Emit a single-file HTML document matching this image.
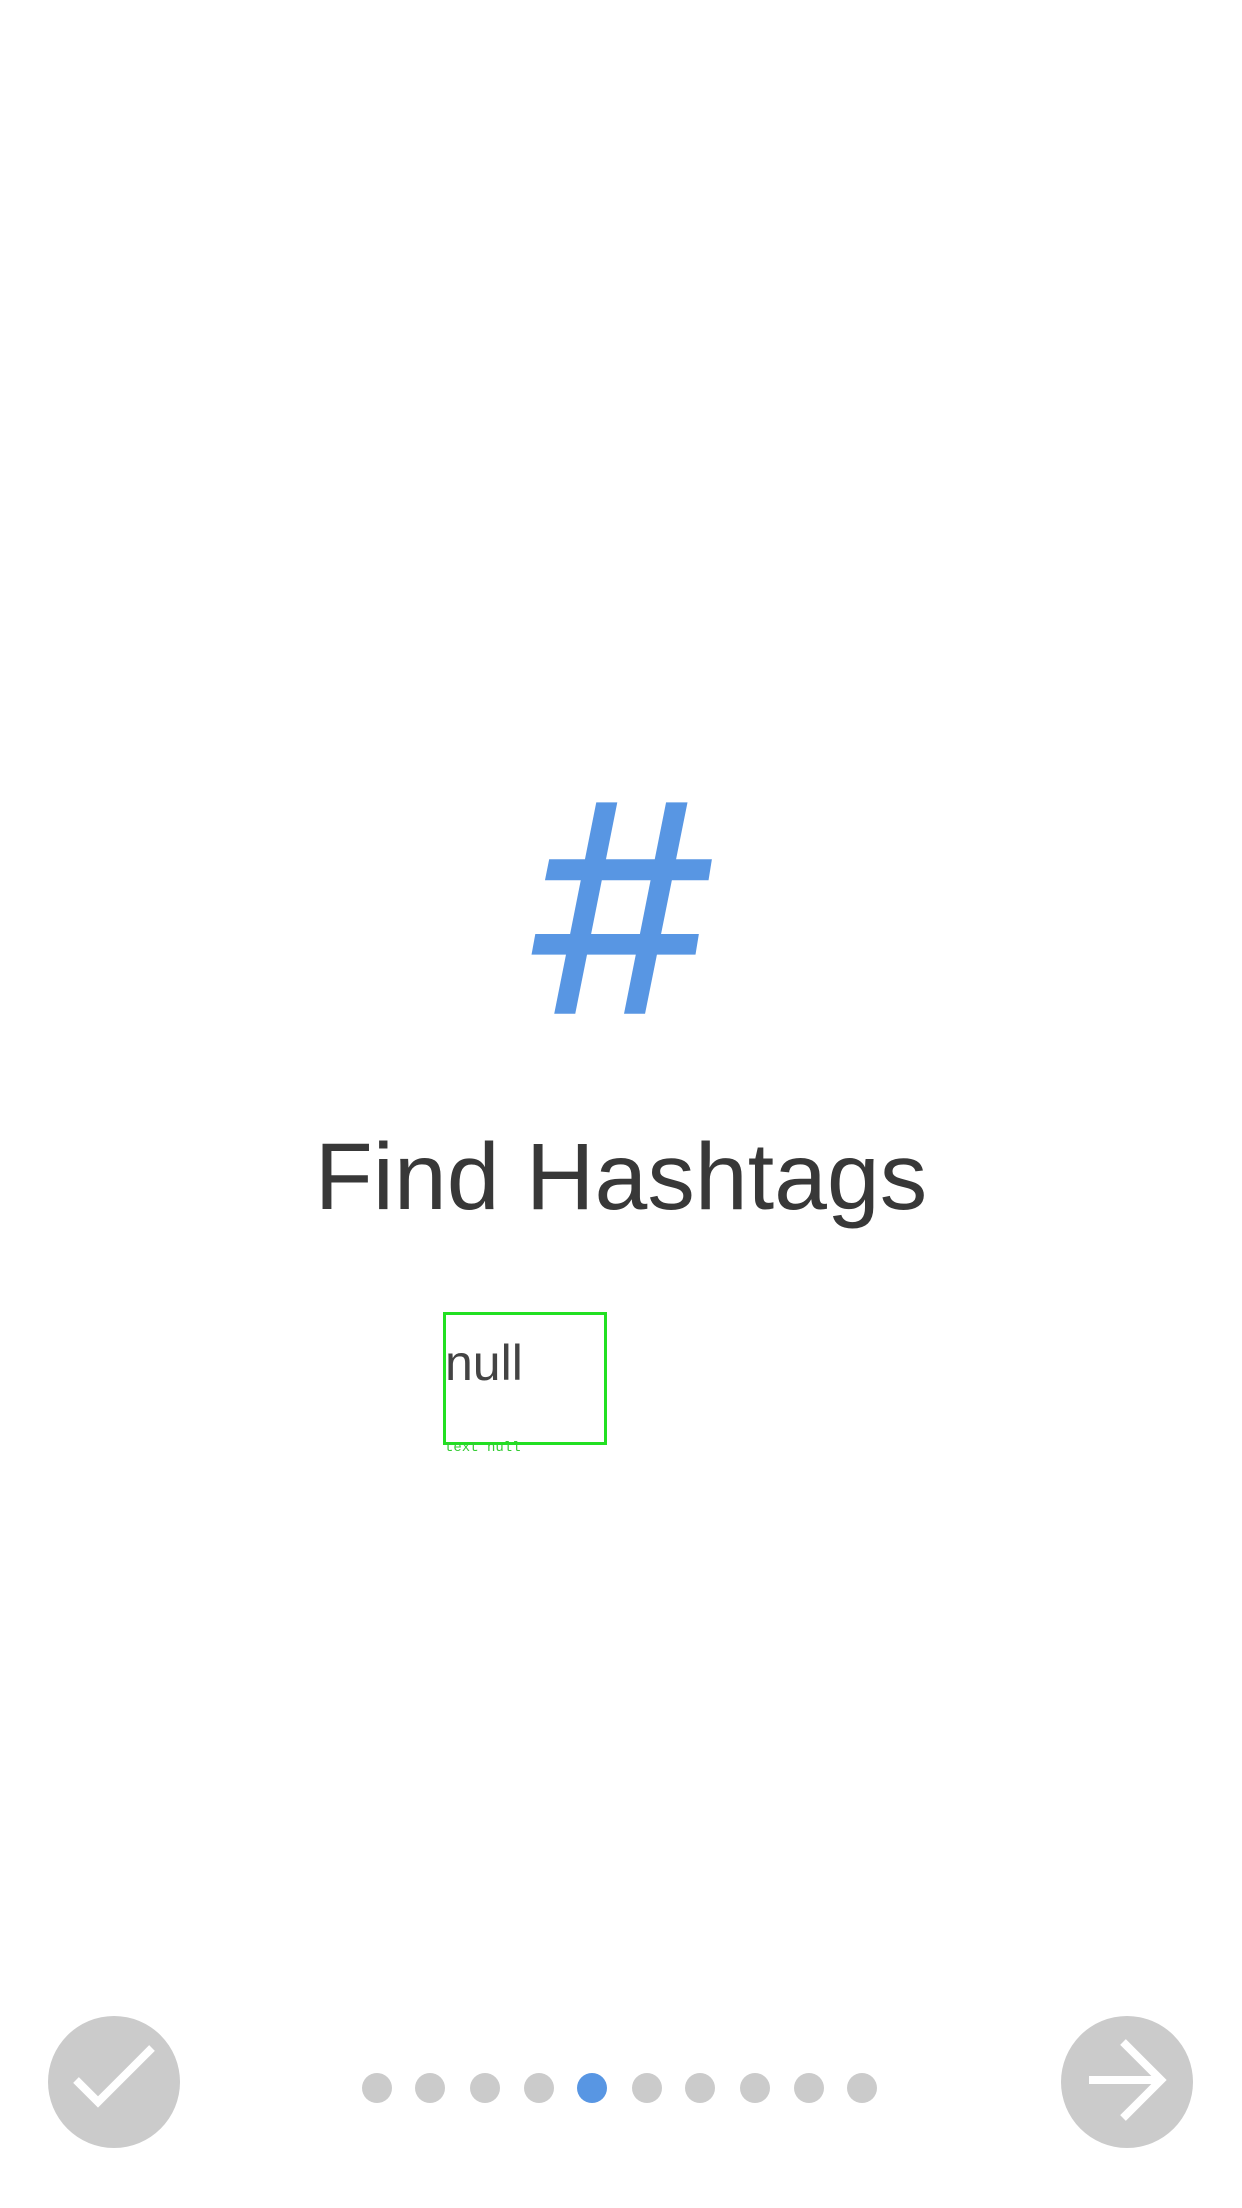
<!DOCTYPE html>
<html><head><meta charset="utf-8"><style>
html,body{margin:0;padding:0;background:#fff;}
body{width:1242px;height:2208px;position:relative;overflow:hidden;font-family:"Liberation Sans",sans-serif;}
.t{position:absolute;left:0;width:1242px;text-align:center;top:1127px;font-size:95px;color:#383838;line-height:100px;}
.box{position:absolute;left:443px;top:1312px;width:158px;height:127px;border:3px solid #22e022;}
.nl{position:absolute;left:445px;top:1336px;font-size:50px;color:#444;line-height:54px;}
.lb{position:absolute;left:445px;top:1440px;font-size:14px;color:#33cc33;font-family:"Liberation Mono",monospace;}
.c{position:absolute;width:132px;height:132px;border-radius:50%;background:#cbcbcb;top:2016px;}
.d{position:absolute;width:30px;height:30px;border-radius:50%;background:#cbcbcb;top:2073px;}
</style></head><body>
<svg style="position:absolute;left:529px;top:801px" width="185" height="215" viewBox="540 50 440 480" preserveAspectRatio="none">
<g fill="#5896e3">
<polygon points="700,53 750,53 650,525 600,525"/>
<polygon points="866,53 917,53 816,525 766,525"/>
<polygon points="588,180 975,180 967,227 578,227"/>
<polygon points="555,347 944,347 936,393 546,393"/>
</g></svg>
<div class="t">Find Hashtags</div>
<div class="box"></div>
<div class="nl">null</div>
<div class="lb">text null</div>
<div class="c" style="left:48px"><svg width="132" height="132" viewBox="0 0 132 132"><polyline points="28,64 50,86 104,32" fill="none" stroke="#fff" stroke-width="8"/></svg></div>
<div class="c" style="left:1061px"><svg width="132" height="132" viewBox="0 0 132 132"><path d="M28,64 H98 M62,26 L100,64 L62,102" fill="none" stroke="#fff" stroke-width="8"/></svg></div>
<div class="d" style="left:362px"></div>
<div class="d" style="left:415px"></div>
<div class="d" style="left:470px"></div>
<div class="d" style="left:524px"></div>
<div class="d" style="left:577px;background:#5896e3"></div>
<div class="d" style="left:632px"></div>
<div class="d" style="left:685px"></div>
<div class="d" style="left:740px"></div>
<div class="d" style="left:794px"></div>
<div class="d" style="left:847px"></div>
</body></html>
